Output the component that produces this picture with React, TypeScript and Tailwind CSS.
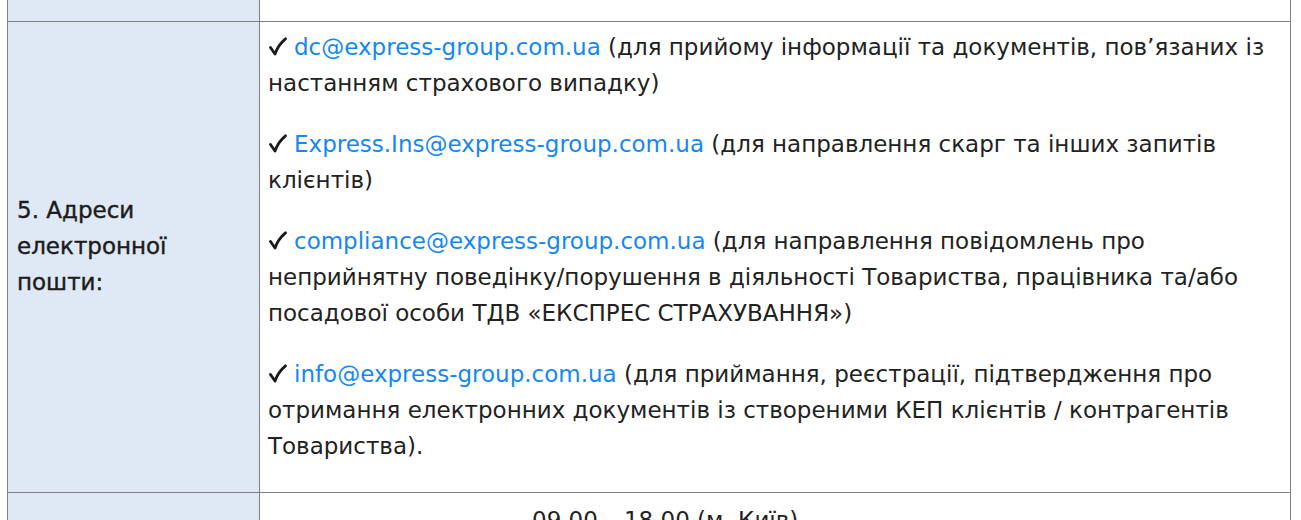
import React from "react";

const emails = [
  {
    mail: "dc@express-group.com.ua",
    note: "(для прийому інформації та документів, пов’язаних із настанням страхового випадку)",
  },
  {
    mail: "Express.Ins@express-group.com.ua",
    note: "(для направлення скарг та інших запитів клієнтів)",
  },
  {
    mail: "compliance@express-group.com.ua",
    note: "(для направлення повідомлень про неприйнятну поведінку/порушення в діяльності Товариства, працівника та/або посадової особи ТДВ «ЕКСПРЕС СТРАХУВАННЯ»)",
  },
  {
    mail: "info@express-group.com.ua",
    note: "(для приймання, реєстрації, підтвердження про отримання електронних документів із створеними КЕП клієнтів / контрагентів Товариства).",
  },
];

function Check() {
  return (
    <svg
      width="19"
      height="19"
      viewBox="0 0 19 19"
      className="mr-[7px] inline-block align-[-1px]"
      fill="none"
      stroke="#1a1a1a"
      strokeWidth="2.8"
      strokeLinecap="round"
      strokeLinejoin="round"
    >
      <path d="M2.5 10.5 L7 17 Q10 8 17.5 1.8" />
    </svg>
  );
}

function App() {
  return (
    <div className="h-[520px] overflow-hidden bg-white font-['DejaVu_Sans',sans-serif] text-[#222]">
      <div className="-mt-[40px] ml-[7px] w-[1284px] border-l border-t border-[#7f7f7f]">
        <div className="grid grid-cols-[252px_1fr] border-b border-[#7f7f7f]">
          <div className="h-[60px] border-r border-[#7f7f7f] bg-[#dee9f5]" />
          <div className="border-r border-[#7f7f7f]" />
        </div>
        <div className="grid grid-cols-[252px_1fr] border-b border-[#7f7f7f]">
          <div className="flex items-center border-r border-[#7f7f7f] bg-[#dee9f5] pl-[9px] pr-4 pb-[22px] text-[23px] leading-[36px] text-[#1c1c1c] [-webkit-text-stroke:0.4px_#1c1c1c]">
            <p>
              5. Адреси
              <br />
              електронної
              <br />
              пошти:
            </p>
          </div>
          <div className="border-r border-[#7f7f7f] pl-[8px] pr-[10px] pt-[7px] pb-[28px] text-[23px] leading-[36px]">
            {emails.map((e, i) => (
              <p key={e.mail} className={i > 0 ? "mt-[25px]" : ""}>
                <Check />
                <a href="#" className="text-[#1487f5]">
                  {e.mail}
                </a>{" "}
                {e.note}
              </p>
            ))}
          </div>
        </div>
        <div className="grid grid-cols-[252px_1fr]">
          <div className="h-[80px] border-r border-[#7f7f7f] bg-[#dee9f5]" />
          <div className="border-r border-[#7f7f7f] pl-[272px] pt-[9px] text-[23px] leading-[36px]">
            09.00 – 18.00 (м. Київ)
          </div>
        </div>
      </div>
    </div>
  );
}

export default App;
